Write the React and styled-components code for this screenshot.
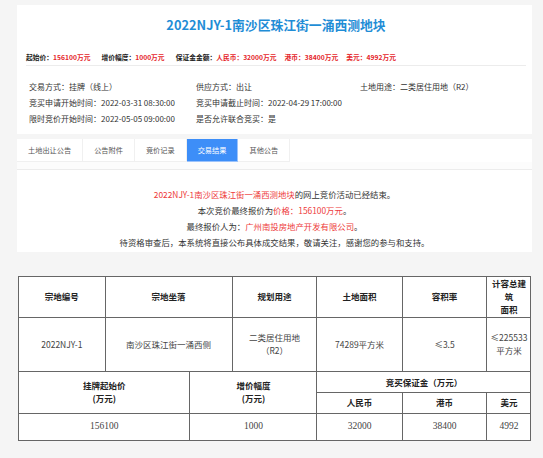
import React from "react";
import styled, { createGlobalStyle } from "styled-components";

const GlobalStyle = createGlobalStyle`
  html, body {
    margin: 0;
    padding: 0;
    background: #f5f5f5;
  }
  body {
    font-family: "Noto Sans CJK SC", "Noto Sans", sans-serif;
    color: #333;
  }
`;

const Page = styled.div`
  width: 543px;
  height: 458px;
  box-sizing: border-box;
  padding: 5px 11px 0 17px;
  overflow: hidden;
`;

const InfoPanel = styled.section`
  background: #fff;
  height: 129px;
  box-sizing: border-box;
  padding: 12px 6px 0 9px;
`;

const Title = styled.h1`
  margin: 0;
  text-align: center;
  font-size: 12.8px;
  line-height: 16px;
  font-weight: bold;
  color: #1f8dd6;
`;

const PriceLine = styled.div`
  margin-top: 18px;
  padding-bottom: 2px;
  border-bottom: 1px solid #ececec;
  font-size: 6.75px;
  line-height: 12px;
  font-weight: bold;
  color: #222;
  white-space: nowrap;
`;

const PriceGroup = styled.span`
  margin-right: ${(p) => p.$gap}px;
`;

const Red = styled.span`
  color: #e5262b;
`;

const Details = styled.div`
  display: grid;
  grid-template-columns: 167px 164px 1fr;
  margin-top: 12.5px;
  padding-left: 3px;
  font-size: 8px;
  line-height: 16px;
  color: #333;
  white-space: nowrap;
`;

const Gap = styled.div`
  height: 5px;
`;

const ResultPanel = styled.section`
  background: #fff;
`;

const TabBar = styled.nav`
  display: flex;
  height: 23px;
  background: #fff;
`;

const Tab = styled.div`
  display: flex;
  align-items: center;
  padding: 0 11px;
  font-size: 7.2px;
  color: ${(p) => (p.$active ? "#fff" : "#555")};
  background: ${(p) => (p.$active ? "#3d8ef8" : "#fff")};
  border-right: 1px solid ${(p) => (p.$active ? "#9cc3fb" : "#f0f0f0")};
  border-bottom: 1px solid ${(p) => (p.$active ? "#9cc3fb" : "#f0f0f0")};
  white-space: nowrap;
`;

const Strip = styled.div`
  height: 7px;
  background: #fcfcfc;
  border-bottom: 1px solid #ececec;
`;

const Message = styled.div`
  height: 82px;
  box-sizing: border-box;
  padding-top: 16px;
  text-align: center;
  font-size: 8.4px;
  line-height: 16px;
  color: #333;
`;

const MsgRed = styled.span`
  color: #ee3b3b;
`;

const Grid = styled.table`
  margin: 24px 0 0 1px;
  width: 513px;
  border-collapse: collapse;
  table-layout: fixed;
  background: #fff;
`;

const Col = styled.col`
  width: ${(p) => p.$w}px;
`;

const Row = styled.tr`
  height: ${(p) => p.$h}px;
`;

const Cell = styled.td`
  border: 1px solid #666;
  padding: 0;
  text-align: center;
  vertical-align: middle;
  font-size: ${(p) => (p.$serif ? "9.5px" : "8.5px")};
  line-height: 13px;
  font-family: ${(p) =>
    p.$serif ? '"Liberation Serif", serif' : '"Noto Sans CJK SC", "Noto Sans", sans-serif'};
  font-weight: ${(p) => (p.$head ? "bold" : "normal")};
  color: ${(p) => (p.$head ? "#222" : "#444")};
`;

const tabs = ["土地出让公告", "公告附件", "竞价记录", "交易结果", "其他公告"];

const widths = [86.6, 84.8, 42.2, 84.9, 85.2, 84.8, 44];

export default function App() {
  return (
    <Page>
      <GlobalStyle />
      <InfoPanel>
        <Title>2022NJY-1南沙区珠江街一涌西测地块</Title>
        <PriceLine>
          <PriceGroup $gap={11}>
            起始价：<Red>156100万元</Red>
          </PriceGroup>
          <PriceGroup $gap={11}>
            增价幅度：<Red>1000万元</Red>
          </PriceGroup>
          <PriceGroup $gap={8}>
            保证金金额：<Red>人民币：32000万元</Red>
          </PriceGroup>
          <PriceGroup $gap={8}>
            <Red>港币：38400万元</Red>
          </PriceGroup>
          <Red>美元：4992万元</Red>
        </PriceLine>
        <Details>
          <span>交易方式：挂牌（线上）</span>
          <span>供应方式：出让</span>
          <span>土地用途：二类居住用地（R2）</span>
          <span>竞买申请开始时间：2022-03-31 08:30:00</span>
          <span>竞买申请截止时间：2022-04-29 17:00:00</span>
          <span />
          <span>限时竞价开始时间：2022-05-05 09:00:00</span>
          <span>是否允许联合竞买：是</span>
          <span />
        </Details>
      </InfoPanel>
      <Gap />
      <ResultPanel>
        <TabBar>
          {tabs.map((t) => (
            <Tab key={t} $active={t === "交易结果"}>
              {t}
            </Tab>
          ))}
        </TabBar>
        <Strip />
        <Message>
          <div>
            <MsgRed>2022NJY-1南沙区珠江街一涌西测地块</MsgRed>的网上竞价活动已经结束。
          </div>
          <div>
            本次竞价最终报价为<MsgRed>价格：156100万元</MsgRed>。
          </div>
          <div>
            最终报价人为：<MsgRed>广州南投房地产开发有限公司</MsgRed>。
          </div>
          <div>待资格审查后，本系统将直接公布具体成交结果，敬请关注，感谢您的参与和支持。</div>
        </Message>
      </ResultPanel>
      <Grid>
        <colgroup>
          {widths.map((w, i) => (
            <Col key={i} $w={w} />
          ))}
        </colgroup>
        <tbody>
          <Row $h={40.5}>
            <Cell $head>宗地编号</Cell>
            <Cell $head colSpan={2}>宗地坐落</Cell>
            <Cell $head>规划用途</Cell>
            <Cell $head>土地面积</Cell>
            <Cell $head>容积率</Cell>
            <Cell $head>
              计容总建
              <br />筑<br />面积
            </Cell>
          </Row>
          <Row $h={54.5}>
            <Cell>2022NJY-1</Cell>
            <Cell colSpan={2}>南沙区珠江街一涌西侧</Cell>
            <Cell>
              二类居住用地
              <br />（R2）
            </Cell>
            <Cell>74289平方米</Cell>
            <Cell>≤3.5</Cell>
            <Cell>
              ≤225533
              <br />
              平方米
            </Cell>
          </Row>
          <Row $h={21}>
            <Cell $head colSpan={2} rowSpan={2}>
              挂牌起始价
              <br />
              (万元)
            </Cell>
            <Cell $head colSpan={2} rowSpan={2}>
              增价幅度
              <br />
              (万元)
            </Cell>
            <Cell $head colSpan={3}>竞买保证金（万元）</Cell>
          </Row>
          <Row $h={20.5}>
            <Cell $head>人民币</Cell>
            <Cell $head>港币</Cell>
            <Cell $head>美元</Cell>
          </Row>
          <Row $h={27}>
            <Cell $serif colSpan={2}>156100</Cell>
            <Cell $serif colSpan={2}>1000</Cell>
            <Cell $serif>32000</Cell>
            <Cell $serif>38400</Cell>
            <Cell $serif>4992</Cell>
          </Row>
        </tbody>
      </Grid>
    </Page>
  );
}
